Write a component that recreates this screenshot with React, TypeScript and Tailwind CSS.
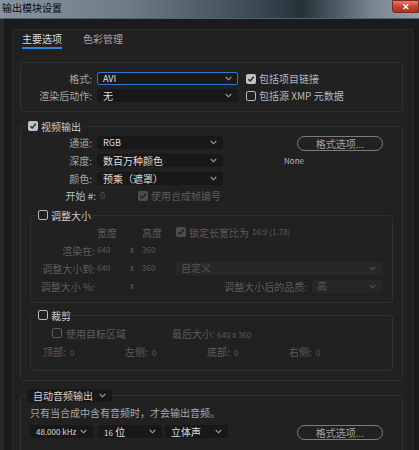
import type { ReactNode } from 'react';

function Chevron({ dim }: { dim?: boolean }) {
  return (
    <svg width="7" height="5" viewBox="0 0 7 5" className="shrink-0">
      <path d="M0.8 1 L3.5 3.8 L6.2 1" fill="none" stroke={dim ? '#4e4e4e' : '#a0a0a0'} strokeWidth="1.1" />
    </svg>
  );
}

function Check({ checked, dim }: { checked?: boolean; dim?: boolean }) {
  if (checked) {
    return (
      <span
        className={
          dim
            ? 'flex h-[10px] w-[10px] shrink-0 items-center justify-center rounded-[2px] bg-[#4c4c4c]'
            : 'flex h-[10px] w-[10px] shrink-0 items-center justify-center rounded-[2px] bg-[#c2c2c2]'
        }
      >
        <svg width="8" height="8" viewBox="0 0 8 8">
          <path d="M1.3 4.2 L3.2 6 L6.8 1.8" fill="none" stroke={dim ? '#222' : '#2a2a2a'} strokeWidth="1.5" />
        </svg>
      </span>
    );
  }
  return (
    <span
      className={
        dim
          ? 'h-[10px] w-[10px] shrink-0 rounded-[2px] border-[1.5px] border-[#5a5a5a]'
          : 'h-[10px] w-[10px] shrink-0 rounded-[2px] border-[1.5px] border-[#b8b8b8]'
      }
    />
  );
}

function Select({ children, className, focus }: { children: ReactNode; className: string; focus?: boolean }) {
  return (
    <div
      className={
        (focus
          ? 'flex h-[13px] items-center justify-between rounded-[2px] border border-[#2b78d0] bg-[#1a1a1a] pl-[5px] pr-[5px] text-[#e2e2e2] '
          : 'flex h-[13px] items-center justify-between rounded-[2px] bg-[#181818] pl-[6px] pr-[6px] text-[#dcdcdc] ') + className
      }
    >
      <span className="leading-none">{children}</span>
      <Chevron />
    </div>
  );
}

function DimSelect({ children, className }: { children: ReactNode; className: string }) {
  return (
    <div className={'flex h-[13px] items-center justify-between rounded-[2px] bg-[#272727] pl-[5px] pr-[7px] text-[#565656] ' + className}>
      <span className="leading-none">{children}</span>
      <Chevron dim />
    </div>
  );
}

function FormatButton() {
  return (
    <div className="flex h-[15px] w-[86px] items-center justify-center rounded-full border-[1.5px] border-[#7c7c7c] text-[10px] leading-none text-[#a2a2a2]">
      格式选项...
    </div>
  );
}

export default function App() {
  return (
    <div className="relative flex h-[450px] w-[419px] flex-col overflow-hidden bg-[#1b1b1b] font-['Noto_Sans_CJK_SC',sans-serif] text-[10px]">
      {/* title bar */}
      <div className="relative flex h-[19px] shrink-0 items-start border-b border-[#56616a] bg-[linear-gradient(90deg,#8793a0_0%,#6e7c88_30%,#3d4b55_60%,#26323a_72%,#76828c_88%,#98a1a8_100%)]">
        <span className="pl-[2px] pt-[2px] text-[10px] leading-[12px] text-[#0a0a0a]">输出模块设置</span>
        <div className="absolute right-0 top-0 flex h-[13px] w-[27px] items-center justify-center rounded-bl-[3px] border border-[#7a2a20] bg-[linear-gradient(180deg,#e4806a,#c2402a_55%,#b3301c)] text-[9px] font-bold leading-none text-white">
          ✕
        </div>
      </div>

      <div className="flex flex-1 border-l-[4px] border-[#2a2a2a] pl-[8px] pt-[10px]">
        {/* main panel */}
        <div className="flex w-[402px] flex-col rounded-t-[3px] border border-b-0 border-[#2b2b2b] bg-[#212121]">
          {/* tabs */}
          <div className="ml-[9px] flex gap-[21px] pt-[2px]">
            <div className="flex flex-col">
              <span className="leading-[14px] text-[#dadada]">主要选项</span>
              <span className="mt-[1px] h-[2px] bg-[#1f8ae6]" />
            </div>
            <span className="leading-[14px] text-[#a6a6a6]">色彩管理</span>
          </div>

          {/* format box */}
          <div className="ml-[7px] mr-[10px] mt-[13px] flex flex-col gap-[4px] rounded-[3px] border border-[#2f2f2f] pb-[9px] pt-[9px]">
            <div className="flex h-[13px] items-center">
              <span className="w-[71px] text-right text-[#a4a4a4]">格式:</span>
              <Select focus className="ml-[5px] w-[141px] text-[9px]">AVI</Select>
              <span className="ml-[8px] flex items-center gap-[3px] text-[#b8b8b8]">
                <Check checked />
                包括项目链接
              </span>
            </div>
            <div className="flex h-[13px] items-center">
              <span className="w-[71px] text-right text-[#a4a4a4]">渲染后动作:</span>
              <Select className="ml-[5px] w-[141px]">无</Select>
              <span className="ml-[8px] flex items-center gap-[3px] text-[#b8b8b8]">
                <Check />
                包括源 XMP 元数据
              </span>
            </div>
          </div>

          {/* video output */}
          <fieldset className="ml-[7px] mr-[10px] mt-[7px] rounded-[3px] border border-[#2f2f2f]">
            <legend className="ml-[5px] flex h-[14px] items-center gap-[3px] px-[2px] text-[#cacaca]">
              <Check checked />
              视频输出
            </legend>
            <div className="flex pr-[19px] pt-[3px]">
              <div className="flex flex-col gap-[5px]">
                <div className="flex h-[13px] items-center">
                  <span className="w-[71px] text-right text-[#a4a4a4]">通道:</span>
                  <Select className="ml-[5px] w-[126px] text-[9px]">RGB</Select>
                </div>
                <div className="flex h-[13px] items-center">
                  <span className="w-[71px] text-right text-[#a4a4a4]">深度:</span>
                  <Select className="ml-[5px] w-[126px]">数百万种颜色</Select>
                </div>
                <div className="flex h-[13px] items-center">
                  <span className="w-[71px] text-right text-[#a4a4a4]">颜色:</span>
                  <Select className="ml-[5px] w-[126px]">预乘（遮罩）</Select>
                </div>
                <div className="mt-[-1px] flex h-[13px] items-center">
                  <span className="w-[75px] text-right text-[#bdbdbd]">开始 #:</span>
                  <span className="ml-[4px] text-[9px] text-[#555]">0</span>
                  <span className="ml-[33px] flex items-center gap-[3px] text-[#5a5a5a]">
                    <Check checked dim />
                    使用合成帧编号
                  </span>
                </div>
              </div>
              <div className="ml-auto flex w-[99px] flex-col">
                <div className="ml-[13px]">
                  <FormatButton />
                </div>
                <span className="mt-[5px] text-[8px] leading-[10px] text-[#b4b4b4]">None</span>
              </div>
            </div>

            {/* resize */}
            <fieldset className="ml-[9px] mr-[9px] mt-[6px] rounded-[3px] border border-[#2f2f2f] pb-[9px]">
              <legend className="ml-[6px] flex h-[14px] items-center gap-[3px] px-[1px] text-[#cacaca]">
                <Check />
                调整大小
              </legend>
              <div className="flex flex-col gap-[4px] pr-[9px] pt-[3px] text-[#5c5c5c]">
                <div className="flex h-[14px] items-center">
                  <span className="w-[64px]" />
                  <span className="ml-[2px] w-[30px]">宽度</span>
                  <span className="w-[15px]" />
                  <span className="w-[34px]">高度</span>
                  <span className="flex items-center gap-[3px]">
                    <Check checked dim />
                    锁定长宽比为 <span className="text-[8px]">16:9 (1.78)</span>
                  </span>
                </div>
                <div className="flex h-[14px] items-center">
                  <span className="w-[64px] text-right">渲染在:</span>
                  <span className="ml-[2px] w-[30px] text-[8px]">640</span>
                  <span className="w-[15px] pl-[3px] text-[8px]">x</span>
                  <span className="w-[34px] text-[8px]">360</span>
                </div>
                <div className="flex h-[14px] items-center">
                  <span className="w-[64px] text-right">调整大小到:</span>
                  <span className="ml-[2px] w-[30px] text-[8px]">640</span>
                  <span className="w-[15px] pl-[3px] text-[8px]">x</span>
                  <span className="w-[34px] text-[8px]">360</span>
                  <DimSelect className="flex-1">自定义</DimSelect>
                </div>
                <div className="flex h-[14px] items-center">
                  <span className="w-[64px] text-right">调整大小 %:</span>
                  <span className="ml-[2px] w-[30px]" />
                  <span className="w-[15px] pl-[3px] text-[8px]">x</span>
                  <span className="flex-1 pr-[5px] text-right">调整大小后的品质:</span>
                  <DimSelect className="w-[71px]">高</DimSelect>
                </div>
              </div>
            </fieldset>

            {/* crop */}
            <fieldset className="mb-[9px] ml-[9px] mr-[9px] mt-[5px] rounded-[3px] border border-[#2f2f2f] pb-[12px]">
              <legend className="ml-[6px] flex h-[14px] items-center gap-[3px] px-[1px] text-[#cacaca]">
                <Check />
                裁剪
              </legend>
              <div className="flex flex-col gap-[4px] pt-[4px] text-[#5c5c5c]">
                <div className="flex h-[14px] items-center pl-[21px]">
                  <Check dim />
                  <span className="ml-[4px] w-[106px]">使用目标区域</span>
                  <span>
                    最后大小: <span className="text-[8px]">640 x 360</span>
                  </span>
                </div>
                <div className="flex h-[14px] items-center pl-[12px]">
                  {['顶部', '左侧', '底部', '右侧'].map((side) => (
                    <span key={side} className="w-[82px]">
                      {side}: <span className="ml-[2px] text-[8px]">0</span>
                    </span>
                  ))}
                </div>
              </div>
            </fieldset>
          </fieldset>

          {/* audio */}
          <fieldset className="ml-[7px] mr-[10px] mt-[8px] flex-1 rounded-t-[3px] border border-b-0 border-[#2f2f2f]">
            <legend className="ml-[6px] flex h-[13px] w-[85px] items-center justify-between rounded-[2px] bg-[#181818] pl-[6px] pr-[6px] text-[#d2d2d2]">
              <span className="leading-none">自动音频输出</span>
              <Chevron />
            </legend>
            <div className="pl-[9px] pr-[19px] pt-[4px]">
              <div className="h-[14px] leading-[14px] text-[#a8a8a8]">只有当合成中含有音频时，才会输出音频。</div>
              <div className="mt-[5px] flex items-start">
                <Select className="w-[63px] text-[8px]">48.000 kHz</Select>
                <Select className="ml-[5px] w-[64px]">
                  <span className="text-[8px]">16</span> 位
                </Select>
                <Select className="ml-[3px] w-[63px]">立体声</Select>
                <div className="ml-auto">
                  <FormatButton />
                </div>
              </div>
            </div>
          </fieldset>
        </div>
        <div className="flex-1 border-l border-[#171717] bg-[#1a1a1a]" />
      </div>
    </div>
  );
}
